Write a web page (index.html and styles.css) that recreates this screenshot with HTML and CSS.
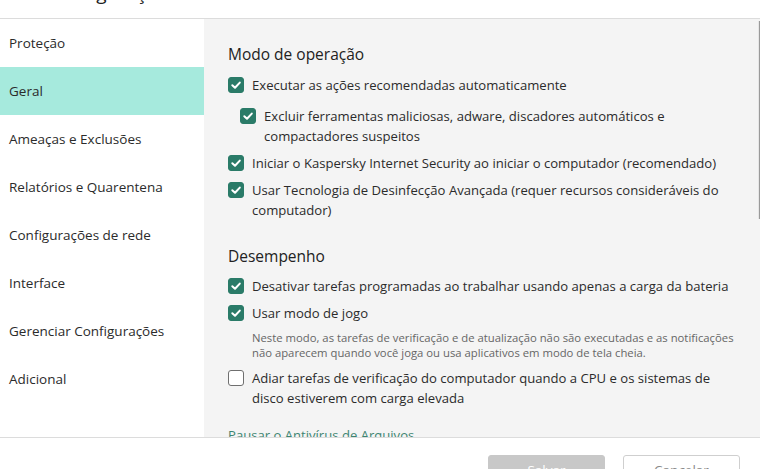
FILE: index.html
```html
<!DOCTYPE html>
<html lang="pt">
<head>
<meta charset="utf-8">
<link rel="stylesheet" href="styles.css">
</head>
<body>
<div class="window">
  <header class="header"><h1 class="title">Configurações</h1></header>
  <div class="main">
    <nav class="sidebar">
      <div class="nav-item">Proteção</div>
      <div class="nav-item active">Geral</div>
      <div class="nav-item">Ameaças e Exclusões</div>
      <div class="nav-item">Relatórios e Quarentena</div>
      <div class="nav-item">Configurações de rede</div>
      <div class="nav-item">Interface</div>
      <div class="nav-item">Gerenciar Configurações</div>
      <div class="nav-item">Adicional</div>
    </nav>
    <section class="content">
      <div class="scrollbar"></div>
      <h2 class="section-title">Modo de operação</h2>
      <label class="row first"><span class="cb checked"><svg viewBox="0 0 16 16"><path d="M4.3 8.2 L7 10.8 L11.8 5.6"/></svg></span><span class="txt">Executar as ações recomendadas automaticamente</span></label>
      <label class="row nested"><span class="cb checked"><svg viewBox="0 0 16 16"><path d="M4.3 8.2 L7 10.8 L11.8 5.6"/></svg></span><span class="txt">Excluir ferramentas maliciosas, adware, discadores automáticos e<br>compactadores suspeitos</span></label>
      <label class="row"><span class="cb checked"><svg viewBox="0 0 16 16"><path d="M4.3 8.2 L7 10.8 L11.8 5.6"/></svg></span><span class="txt">Iniciar o Kaspersky Internet Security ao iniciar o computador (recomendado)</span></label>
      <label class="row"><span class="cb checked"><svg viewBox="0 0 16 16"><path d="M4.3 8.2 L7 10.8 L11.8 5.6"/></svg></span><span class="txt">Usar Tecnologia de Desinfecção Avançada (requer recursos consideráveis do<br>computador)</span></label>

      <h2 class="section-title second">Desempenho</h2>
      <label class="row first"><span class="cb checked"><svg viewBox="0 0 16 16"><path d="M4.3 8.2 L7 10.8 L11.8 5.6"/></svg></span><span class="txt nowrap">Desativar tarefas programadas ao trabalhar usando apenas a carga da bateria</span></label>
      <label class="row"><span class="cb checked"><svg viewBox="0 0 16 16"><path d="M4.3 8.2 L7 10.8 L11.8 5.6"/></svg></span><span class="txt">Usar modo de jogo</span></label>
      <p class="note">Neste modo, as tarefas de verificação e de atualização não são executadas e as notificações<br>não aparecem quando você joga ou usa aplicativos em modo de tela cheia.</p>
      <label class="row after-note"><span class="cb"></span><span class="txt">Adiar tarefas de verificação do computador quando a CPU e os sistemas de<br>disco estiverem com carga elevada</span></label>
      <a class="link">Pausar o Antivírus de Arquivos</a>
    </section>
  </div>
  <footer class="footer">
    <button class="btn primary">Salvar</button>
    <button class="btn secondary">Cancelar</button>
  </footer>
</div>
</body>
</html>
```
FILE: styles.css
```css
* { box-sizing: border-box; }
html, body { margin: 0; padding: 0; }
body {
  font-family: "Open Sans", "Noto Sans", sans-serif;
  color: #2b2b2b;
  background: #fff;
  width: 760px;
  height: 469px;
  overflow: hidden;
}
.window { display: flex; flex-direction: column; height: 469px; }
.header {
  height: 19px;
  flex: none;
  overflow: hidden;
  border-bottom: 1px solid #dcdcdc;
}
.title {
  margin: -18px 0 0 50px;
  font-size: 19px;
  line-height: 22px;
  font-weight: 400;
  color: #222;
}
.main {
  display: flex;
  height: 419px;
  flex: none;
  border-bottom: 1px solid #dcdcdc;
  overflow: hidden;
}
.sidebar { width: 204px; flex: none; background: #fff; }
.nav-item {
  height: 48px;
  display: flex;
  align-items: center;
  padding-left: 9px;
  font-size: 13.5px;
  color: #2b2b2b;
}
.nav-item.active { background: #a6eadd; }
.content {
  flex: 1;
  position: relative;
  background: #f4f4f4;
  padding: 24px 0 0 24px;
  overflow: hidden;
}
.scrollbar {
  position: absolute;
  right: 0;
  top: 2px;
  width: 2px;
  height: 198px;
  background: #9a9a9a;
  border-left: 1px solid #e6e6e6;
}
.section-title {
  margin: 0;
  font-size: 15.5px;
  line-height: 22px;
  font-weight: 400;
  color: #222;
}
.section-title.second { margin-top: 25px; }
.row {
  display: flex;
  align-items: flex-start;
  margin-top: 7px;
  font-size: 13.1px;
  line-height: 20px;
  padding-right: 6px;
}
.row.first { margin-top: 10px; }
.section-title.second + .row.first { margin-top: 9px; }
.row.nested { margin-top: 11px; padding-left: 12px; }
.row.after-note { margin-top: 8px; }
.cb {
  flex: none;
  width: 16px;
  height: 16px;
  margin: 2px 8px 0 0;
  border-radius: 3px;
  border: 1.5px solid #6f6f6f;
  background: #fff;
  display: flex;
}
.cb.checked { background: #2a7b68; border-color: #2a7b68; }
.cb svg { width: 16px; height: 16px; margin: -1.5px; }
.cb path { fill: none; stroke: #fff; stroke-width: 2; stroke-linecap: round; stroke-linejoin: round; }
.txt { display: block; }
.txt.nowrap { white-space: nowrap; }
.note {
  margin: 7px 0 0 24px;
  font-size: 11.3px;
  line-height: 15px;
  color: #666;
  white-space: nowrap;
}
.link {
  display: block;
  margin-top: 17px;
  font-size: 13.1px;
  line-height: 20px;
  color: #3d8571;
}
.footer {
  flex: 1;
  display: flex;
  justify-content: flex-end;
  align-items: flex-start;
  padding: 17px 20px 0 0;
  gap: 18px;
}
.btn {
  width: 117px;
  height: 30px;
  border-radius: 3px;
  font-family: inherit;
  font-size: 13.5px;
}
.btn.primary { background: #c8c8c8; border: 1px solid #c8c8c8; color: #fff; }
.btn.secondary { background: #fff; border: 1px solid #cfcfcf; color: #8a8a8a; }
```
